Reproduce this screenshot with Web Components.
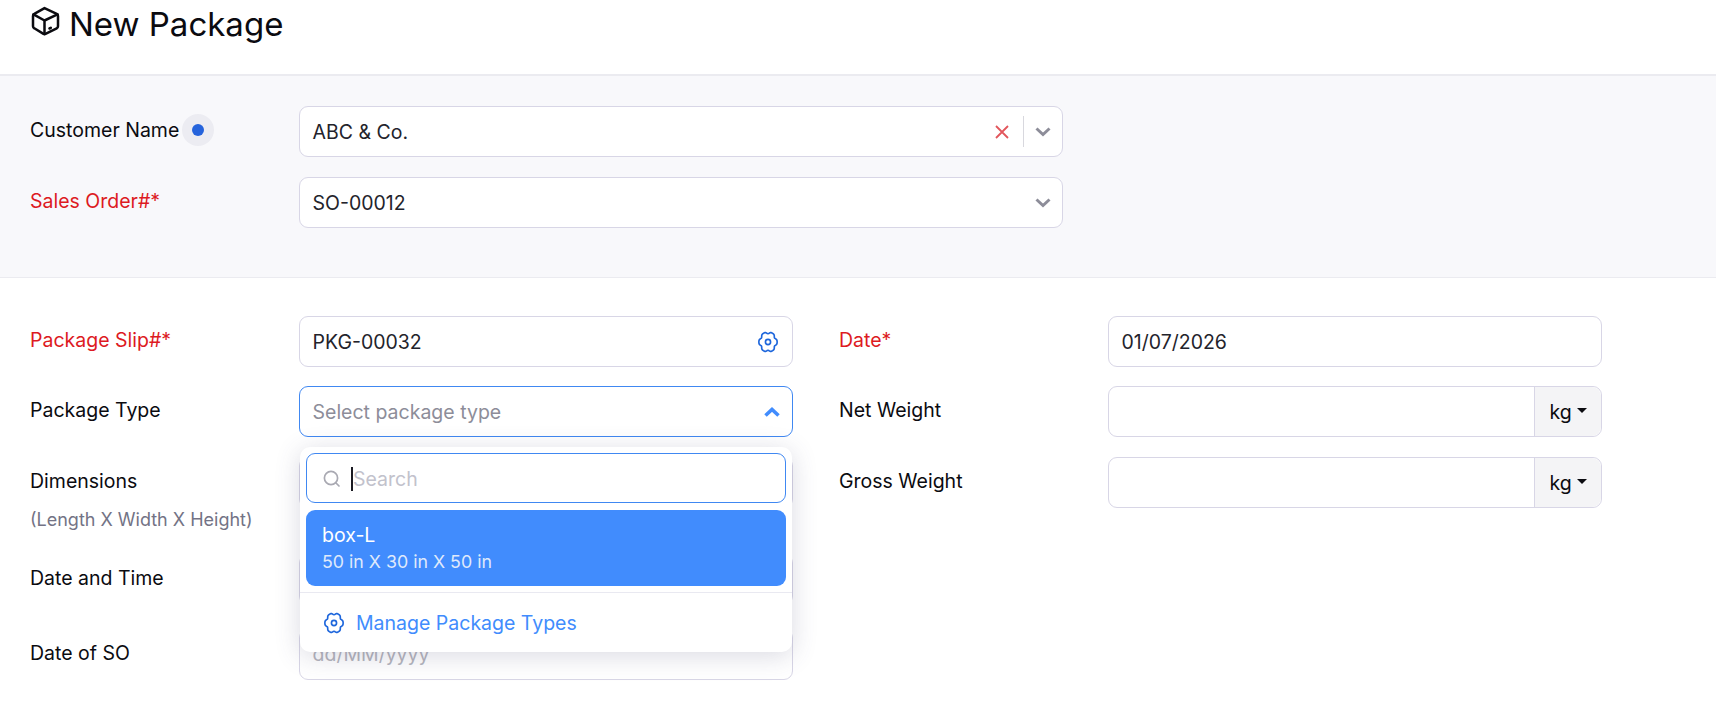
<!DOCTYPE html>
<html>
<head>
<meta charset="utf-8">
<title>New Package</title>
<style>
  html, body { margin: 0; padding: 0; background: #fff; }
  body { font-family: Inter, "Noto Sans", sans-serif; color: #0b0b10; width: 1716px; height: 728px; overflow: hidden; }
</style>
</head>
<body>
<app-page></app-page>
<script>
// six rounded lobes, one pointing left and one right
function gearPath() {
  let d = '';
  for (let i = 0; i < 72; i++) {
    const a = i * Math.PI / 36;
    const r = 9.3 + 0.9 * Math.cos(6 * a) - 0.25 * Math.cos(12 * a);
    d += (i ? 'L' : 'M') + (12 + r * Math.cos(a)).toFixed(2) + ' ' + (12 + 1.1 * r * Math.sin(a)).toFixed(2);
  }
  return d + 'Z';
}

const GEAR = `<svg width="22" height="22" viewBox="0 0 24 24" fill="none" stroke="currentColor" stroke-width="1.8" stroke-linejoin="round"><path d="${gearPath()}"/><circle cx="12" cy="12" r="2.8"/></svg>`;

const CHEVRON = `<svg width="16" height="10" viewBox="0 0 16 10" fill="none" stroke="currentColor" stroke-width="3"><path d="M1.5 1.5 8 7.5l6.5-6"/></svg>`;

class FormLabel extends HTMLElement {
  connectedCallback() {
    const shadow = this.attachShadow({ mode: 'open' });
    shadow.innerHTML = `
      <style>
        :host { display: block; padding-top: 12px; font-size: 19.5px; line-height: 24px; color: #0b0b10; }
        :host([required]) { color: #dd1a22; }
      </style>
      <slot></slot>`;
  }
}
customElements.define('form-label', FormLabel);

class FormField extends HTMLElement {
  connectedCallback() {
    const shadow = this.attachShadow({ mode: 'open' });
    const unit = this.getAttribute('unit');
    shadow.innerHTML = `
      <style>
        :host { display: flex; box-sizing: border-box; height: 51px; background: #fff; border: 1px solid #d8d6e6; border-radius: 9px; font-size: 19.5px; color: #23232b; align-items: center; }
        :host([focused]) { border-color: #4088f2; }
        .text { flex: 1; padding-left: 12.5px; white-space: nowrap; }
        .ph { color: #8d8d99; }
        .faint { color: #b4b4bc; }
        .icons { display: flex; align-items: center; padding-right: 10px; }
        .unit { box-sizing: border-box; align-self: stretch; width: 67px; display: flex; align-items: center; justify-content: center; gap: 5px; background: #f4f4f6; border-left: 1px solid #d8d6e6; border-radius: 0 9px 9px 0; color: #0b0b10; }
        .unit i { border: 5.5px solid transparent; border-top: 5.5px solid #0b0b10; border-bottom: 0; margin-top: -2px; }
      </style>
      <div class="text ${this.hasAttribute('placeholder') ? (this.hasAttribute('faint') ? 'faint' : 'ph') : ''}"><slot></slot></div>
      <div class="icons" part="icons"><slot name="icons"></slot></div>
      ${unit ? `<div class="unit">${unit}<i></i></div>` : ''}`;
    if (unit) shadow.querySelector('.icons').remove();
  }
}
customElements.define('form-field', FormField);

class PackageTypeMenu extends HTMLElement {
  connectedCallback() {
    const shadow = this.attachShadow({ mode: 'open' });
    shadow.innerHTML = `
      <style>
        :host { position: absolute; z-index: 5; left: 1px; right: 1px; top: 61px; display: block; height: 205px; box-sizing: border-box; background: #fff; border-radius: 10px; box-shadow: 0 4px 26px rgba(70, 70, 110, .2); padding: 6px 6px 0; color: #fff; }
        .search { box-sizing: border-box; height: 50px; border: 1px solid #4088f2; border-radius: 9px; display: flex; align-items: center; padding: 1px 0 0 15px; gap: 9px; color: #c2c2cc; font-size: 19.5px; }
        .search svg { flex: none; color: #a9a9b2; }
        .caret { width: 2px; height: 24px; background: #1a1a22; margin-right: -9px; position: relative; z-index: 1; }
        .item { box-sizing: border-box; height: 76px; margin-top: 7px; background: #418cfd; border-radius: 9px; padding: 13px 16px; }
        .item b { display: block; font-weight: 400; font-size: 19.5px; line-height: 25px; }
        .item span { display: block; font-size: 17.8px; line-height: 27px; color: #dfe9fb; }
        .rule { height: 1px; background: #e9e9f1; margin: 6px -6px 0; }
        .manage { display: flex; align-items: center; gap: 11px; height: 60px; padding-left: 17px; color: #418cfd; font-size: 19.5px; }
        .manage svg { color: #1d66dc; flex: none; }
      </style>
      <div class="search">
        <svg width="20" height="20" viewBox="0 0 20 20" fill="none" stroke="currentColor" stroke-width="1.7" stroke-linecap="round"><circle cx="9" cy="9" r="6.6"/><path d="m14 14 3 3"/></svg>
        <span class="caret"></span><span>Search</span>
      </div>
      <div class="item"><b>box-L</b><span>50 in X 30 in X 50 in</span></div>
      <div class="rule"></div>
      <div class="manage">${GEAR}<span>Manage Package Types</span></div>`;
  }
}
customElements.define('package-type-menu', PackageTypeMenu);

class AppPage extends HTMLElement {
  connectedCallback() {
    const shadow = this.attachShadow({ mode: 'open' });
    shadow.innerHTML = `
      <style>
        :host { display: block; }
        header { box-sizing: border-box; height: 74px; display: flex; align-items: flex-start; gap: 9px; padding: 5px 0 0 30px; }
        header svg { flex: none; margin-top: 1px; }
        h1 { margin: -1px 0 0; font-weight: 400; font-size: 33px; line-height: 40px; letter-spacing: 0; color: #0b0b10; }
        .customer { box-sizing: border-box; height: 204px; background: #f8f8fb; border-top: 2px solid #ebebf0; border-bottom: 1px solid #ebebf0; padding: 30px 0 0 30px; display: grid; grid-template-columns: 269px 764px; row-gap: 20px; align-content: start; }
        .dotted { display: flex; align-items: flex-start; gap: 3px; }
        .dot { width: 32px; height: 32px; margin-top: -4px; border-radius: 50%; background: #ececf2; display: flex; align-items: center; justify-content: center; }
        .dot i { width: 12px; height: 12px; border-radius: 50%; background: #2563dc; }
        .clear { width: 14px; height: 14px; color: #e2565c; }
        .sep { width: 1px; height: 31px; background: #d8d8de; margin: 0 11px 0 14px; }
        .chev { display: flex; color: #8d8d99; margin-right: 1px; }
        .chev.up { color: #418cfd; transform: scaleY(-1); margin-right: 2px; }
        .chev.up svg { stroke-width: 3.6; }
        main { padding: 38px 0 0 30px; display: grid; grid-template-columns: 763px 763px; column-gap: 46px; align-items: start; }
        .col { display: grid; grid-template-columns: 269px 494px; row-gap: 19px; }
        .anchor { position: relative; }
        .sub { font-size: 18px; line-height: 24px; color: #737385; margin-top: 15px; }
        .step { margin-bottom: 1px; }
        .tall { margin-bottom: 27px; }
        .time { margin-bottom: 4.5px; }
        .gear { color: #1d66dc; display: flex; margin-right: 3px; }
      </style>
      <header>
        <svg width="30" height="30" viewBox="0 0 30 30" fill="none" stroke="#0b0b10" stroke-width="2.5" stroke-linejoin="round" stroke-linecap="round"><path d="M14.500 2.100 26.700 7.900c.8.4 1.300 1.100 1.300 2v10.400c0 .9-.5 1.600-1.300 2L15.500 27.900c-.6.300-1.400.3-2 0L4.300 22.300c-.8-.4-1.300-1.100-1.300-2V9.900c0-.9.500-1.600 1.300-2z"/><path d="M3.500 8.300 14.500 14.500 27.500 8.300M14.500 14.500V28"/><path d="M19.500 22.500 20.800 21.900" stroke-width="2.600"/></svg>
        <h1>New Package</h1>
      </header>
      <section class="customer">
        <form-label class="dotted"><span class="dotted">Customer Name<span class="dot"><i></i></span></span></form-label>
        <form-field>ABC &amp; Co.
          <svg slot="icons" class="clear" viewBox="0 0 14 14" fill="none" stroke="currentColor" stroke-width="1.800"><path d="m1 1 12 12M13 1 1 13"/></svg>
          <span slot="icons" class="sep"></span>
          <span slot="icons" class="chev">${CHEVRON}</span>
        </form-field>
        <form-label required>Sales Order#*</form-label>
        <form-field>SO-00012<span slot="icons" class="chev">${CHEVRON}</span></form-field>
      </section>
      <main>
        <div class="col">
          <form-label required>Package Slip#*</form-label>
          <form-field>PKG-00032<span slot="icons" class="gear">${GEAR}</span></form-field>
          <form-label>Package Type</form-label>
          <div class="anchor step">
            <form-field focused placeholder>Select package type<span slot="icons" class="chev up">${CHEVRON}</span></form-field>
            <package-type-menu></package-type-menu>
          </div>
          <form-label>Dimensions<div class="sub">(Length X Width X Height)</div></form-label>
          <form-field class="tall"></form-field>
          <form-label>Date and Time</form-label>
          <form-field class="time"></form-field>
          <form-label>Date of SO</form-label>
          <form-field placeholder faint>dd/MM/yyyy</form-field>
        </div>
        <div class="col">
          <form-label required>Date*</form-label>
          <form-field>01/07/2026</form-field>
          <form-label>Net Weight</form-label>
          <form-field class="step" unit="kg"></form-field>
          <form-label>Gross Weight</form-label>
          <form-field unit="kg"></form-field>
        </div>
      </main>`;
  }
}
customElements.define('app-page', AppPage);
</script>
</body>
</html>
